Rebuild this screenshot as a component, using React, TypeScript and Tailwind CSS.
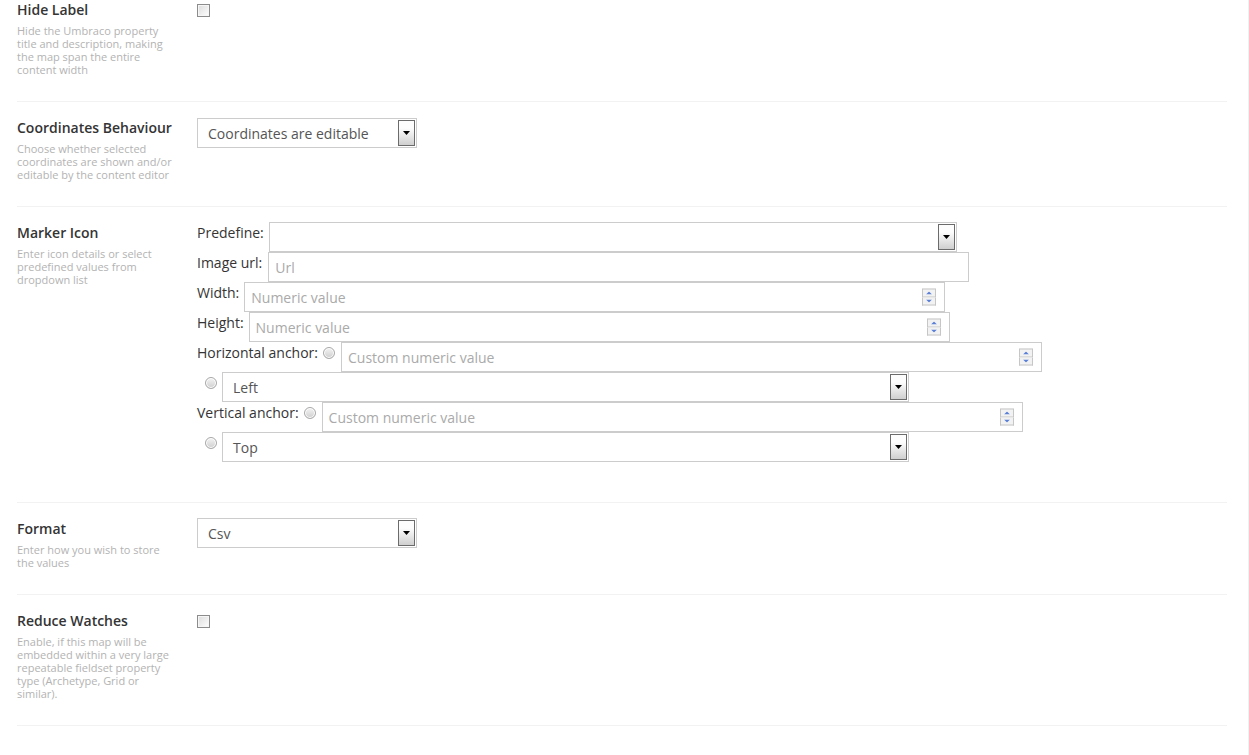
import React from "react";

const font = { fontFamily: '"Open Sans", "Liberation Sans", sans-serif' };

function SelectBox({ value, width }: { value?: string; width: string }) {
  return (
    <div
      className={`relative h-[30px] ${width} border border-[#cccccc] bg-white flex items-center pl-[10px] text-[14px] text-[#555555]`}
    >
      <span>{value}</span>
      <div className="absolute right-[1px] top-[1px] bottom-[1px] w-[17px] border border-[#6b6b6b] bg-gradient-to-b from-[#fdfdfd] from-30% to-[#cfcfcf] flex items-center justify-center">
        <svg width="7" height="4" viewBox="0 0 7 4">
          <path d="M0 0 H7 L3.5 4 Z" fill="#000" />
        </svg>
      </div>
    </div>
  );
}

function Spinner() {
  return (
    <div className="absolute right-[8px] top-1/2 -translate-y-1/2 flex flex-col w-[14px]">
      <div className="h-[9px] border border-[#c6c6c6] bg-[#f2f2f2] flex items-center justify-center">
        <svg width="6" height="3" viewBox="0 0 6 3">
          <path d="M0 3 H6 L3 0 Z" fill="#5a7fd6" />
        </svg>
      </div>
      <div className="h-[8px] border border-t-0 border-[#c6c6c6] bg-[#f2f2f2] flex items-center justify-center">
        <svg width="6" height="3" viewBox="0 0 6 3">
          <path d="M0 0 H6 L3 3 Z" fill="#5a7fd6" />
        </svg>
      </div>
    </div>
  );
}

function TextBox({ placeholder, number }: { placeholder: string; number?: boolean }) {
  return (
    <div className="relative h-[30px] w-[701px] border border-[#cccccc] bg-white flex items-center pl-[6px] text-[14px] text-[#aaaaaa]">
      <span>{placeholder}</span>
      {number && <Spinner />}
    </div>
  );
}

function Radio() {
  return (
    <span className="block w-[12px] h-[12px] rounded-full border border-[#a8a8a8] bg-gradient-to-b from-[#f4f4f4] to-[#cfcfcf] shadow-[inset_0_0_0_1px_#ffffff]" />
  );
}

function Checkbox() {
  return (
    <span className="mt-[4px] block w-[13px] h-[13px] border border-[#8c8c8c] bg-gradient-to-br from-[#dcdcdc] to-[#ffffff] shadow-[inset_0_0_0_1px_#f6f6f6]" />
  );
}

function Row({
  label,
  desc,
  first,
  children,
}: {
  label: string;
  desc: string;
  first?: boolean;
  children: React.ReactNode;
}) {
  return (
    <div className={`flex border-b border-[#f2f2f2] pb-[25px] ${first ? "pt-0" : "pt-[16px]"}`}>
      <div className="w-[180px] shrink-0 pr-[20px]">
        <div className="text-[14px] leading-[20px] font-semibold text-[#343434]">{label}</div>
        <div className="mt-[4px] text-[11px] leading-[13px] text-[#b3b3b3]">{desc}</div>
      </div>
      <div className="flex-1">{children}</div>
    </div>
  );
}

export default function App() {
  const lbl = "text-[14px] leading-[20px] text-[#343434] mt-[1px]";
  return (
    <div style={font} className="w-[1249px] min-h-[755px] bg-white border-r border-[#f0f0f0]">
      <div className="pl-[17px] pr-[21px]">
        <Row
          first
          label="Hide Label"
          desc="Hide the Umbraco property title and description, making the map span the entire content width"
        >
          <Checkbox />
        </Row>

        <Row
          label="Coordinates Behaviour"
          desc="Choose whether selected coordinates are shown and/or editable by the content editor"
        >
          <SelectBox value="Coordinates are editable" width="w-[220px]" />
        </Row>

        <Row label="Marker Icon" desc="Enter icon details or select predefined values from dropdown list">
          <div className="-mt-[1px] pb-[15px] flex flex-col">
            <div className="flex items-start gap-[5px]">
              <span className={lbl}>Predefine:</span>
              <SelectBox width="w-[688px]" />
            </div>
            <div className="flex items-start gap-[6px]">
              <span className={lbl}>Image url:</span>
              <TextBox placeholder="Url" />
            </div>
            <div className="flex items-start gap-[5px]">
              <span className={lbl}>Width:</span>
              <TextBox placeholder="Numeric value" number />
            </div>
            <div className="flex items-start gap-[5px]">
              <span className={lbl}>Height:</span>
              <TextBox placeholder="Numeric value" number />
            </div>
            <div className="flex items-start">
              <span className={lbl}>Horizontal anchor:</span>
              <span className="ml-[5px] mr-[6px] mt-[5px] flex">
                <Radio />
              </span>
              <TextBox placeholder="Custom numeric value" number />
            </div>
            <div className="flex items-start">
              <span className="ml-[8px] mr-[5px] mt-[5px] flex">
                <Radio />
              </span>
              <SelectBox value="Left" width="w-[687px]" />
            </div>
            <div className="flex items-start">
              <span className={lbl}>Vertical anchor:</span>
              <span className="ml-[5px] mr-[6px] mt-[5px] flex">
                <Radio />
              </span>
              <TextBox placeholder="Custom numeric value" number />
            </div>
            <div className="flex items-start">
              <span className="ml-[8px] mr-[5px] mt-[5px] flex">
                <Radio />
              </span>
              <SelectBox value="Top" width="w-[687px]" />
            </div>
          </div>
        </Row>

        <Row label="Format" desc="Enter how you wish to store the values">
          <div className="-mt-[1px]">
            <SelectBox value="Csv" width="w-[220px]" />
          </div>
        </Row>

        <Row
          label="Reduce Watches"
          desc="Enable, if this map will be embedded within a very large repeatable fieldset property type (Archetype, Grid or similar)."
        >
          <Checkbox />
        </Row>
      </div>
    </div>
  );
}
